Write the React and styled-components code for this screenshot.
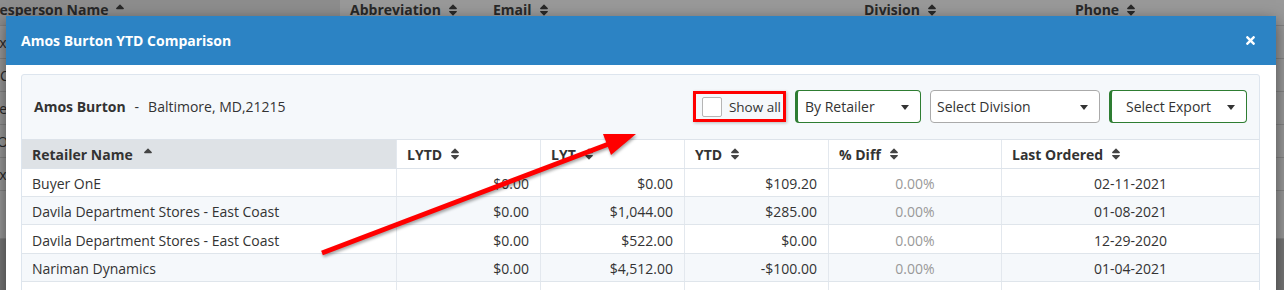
import React from 'react';
import styled, { createGlobalStyle } from 'styled-components';
import { FaSort, FaSortUp, FaTimes } from 'react-icons/fa';

const GlobalStyle = createGlobalStyle`
  html, body {
    margin: 0;
    padding: 0;
    width: 1284px;
    height: 290px;
    overflow: hidden;
    background: #c6c6c6;
    font-family: 'Open Sans', 'Noto Sans', sans-serif;
    color: #333;
  }
`;

const Page = styled.div`
  position: relative;
  width: 1284px;
  height: 290px;
  overflow: hidden;
`;

/* ---------- page behind the modal ---------- */

const BgTable = styled.div`
  margin-left: -31px;
  margin-top: -8px;
  background: #fff;
`;

const BgRow = styled.div`
  display: grid;
  grid-template-columns: 371px 143px 371px 211px 1fr;
  height: ${(p) => p.$h || 33}px;
  border-bottom: 1px solid #dcdcdc;
  box-sizing: border-box;
  font-size: 14px;
  color: #444;
  align-items: center;
`;

const BgHeadCell = styled.div`
  height: 100%;
  display: flex;
  align-items: center;
  gap: 5px;
  padding: 2px 10px 0;
  box-sizing: border-box;
  font-size: 14px;
  font-weight: 700;
  color: #444;
  background: ${(p) => (p.$sorted ? '#ececec' : '#fff')};
  svg {
    font-size: 14px;
  }
`;

const BgCell = styled.div`
  padding: 0 10px;
  white-space: nowrap;
  overflow: hidden;
`;

const Backdrop = styled.div`
  position: absolute;
  inset: 0;
  background: rgba(0, 0, 0, 0.4);
`;

/* ---------- modal ---------- */

const Modal = styled.div`
  position: absolute;
  left: 6px;
  top: 16px;
  width: 1270px;
  height: 300px;
  background: #fff;
  box-shadow: 0 5px 15px rgba(0, 0, 0, 0.5);
`;

const ModalHeader = styled.div`
  height: 49px;
  background: #2c83c4;
  display: flex;
  align-items: center;
  justify-content: space-between;
  padding: 0 19px 0 15px;
  color: #fff;
`;

const Title = styled.h4`
  margin: 0;
  font-size: 14px;
  font-weight: 700;
`;

const Close = styled.span`
  display: flex;
  font-size: 13px;
`;

const ModalBody = styled.div`
  padding: 9px 16px 0 15px;
`;

const Panel = styled.div`
  background: #f5f8fb;
  border: 1px solid #dde5ee;
  border-radius: 3px;
`;

const PanelHeading = styled.div`
  display: flex;
  align-items: center;
  justify-content: space-between;
  padding: 15px 12px 16px 12px;
`;

const Who = styled.div`
  font-size: 14px;
  color: #333;
  b {
    font-weight: 700;
  }
  span {
    margin: 0 9px;
  }
`;

const Controls = styled.div`
  display: flex;
  align-items: center;
  gap: 9px;
`;

const ShowAll = styled.label`
  display: flex;
  align-items: center;
  gap: 7px;
  height: 31px;
  box-sizing: border-box;
  border: 3px solid #ff0000;
  padding: 0 2px 0 6px;
  font-size: 13.5px;
  color: #333;
  box-shadow: 1px 1px 3px rgba(0, 0, 0, 0.25);
`;

const Check = styled.span`
  width: 20px;
  height: 20px;
  box-sizing: border-box;
  background: #fff;
  border: 1px solid #b5b5b5;
  border-radius: 2px;
`;

const Select = styled.div`
  position: relative;
  width: ${(p) => p.$w}px;
  height: 33px;
  box-sizing: border-box;
  display: flex;
  align-items: center;
  padding-left: ${(p) => p.$pad}px;
  background: #fff;
  border: 1px solid ${(p) => (p.$green ? '#2e7d32' : '#aaa')};
  border-left-width: ${(p) => (p.$green ? 3 : 1)}px;
  border-radius: 4px;
  font-size: 14px;
  color: #333;
  &::after {
    content: '';
    position: absolute;
    right: 11px;
    top: 14px;
    border-left: 4px solid transparent;
    border-right: 4px solid transparent;
    border-top: 5px solid #333;
  }
`;

/* ---------- table ---------- */

const cols = '374px 144px 144px 144px 173px 1fr';

const HeadRow = styled.div`
  display: grid;
  grid-template-columns: ${cols};
  height: 30px;
  border-top: 1px solid #dde3ea;
  border-bottom: 1px solid #dde3ea;
  box-sizing: border-box;
  background: #fff;
`;

const HeadCell = styled.div`
  display: flex;
  align-items: center;
  gap: ${(p) => (p.$sorted ? 8 : 6)}px;
  padding: 0 10px;
  font-size: 14px;
  font-weight: 700;
  color: #333;
  background: ${(p) => (p.$sorted ? '#dee2e6' : '#fff')};
  border-left: ${(p) => (p.$first ? 'none' : '1px solid #e3e8ee')};
  svg {
    font-size: 14px;
    color: #444;
  }
`;

const Row = styled.div`
  display: grid;
  grid-template-columns: ${cols};
  height: ${(p) => p.$h}px;
  border-bottom: 1px solid #dfe5eb;
  box-sizing: border-box;
  background: ${(p) => (p.$striped ? '#f5f8fb' : '#fff')};
`;

const Cell = styled.div`
  display: flex;
  align-items: center;
  justify-content: ${(p) =>
    p.$align === 'right' ? 'flex-end' : p.$align === 'center' ? 'center' : 'flex-start'};
  padding: ${(p) => (p.$align === 'right' ? '2px 11px 0 10px' : '2px 10px 0')};
  font-size: 14px;
  color: ${(p) => (p.$muted ? '#999' : '#333')};
  border-left: ${(p) => (p.$first ? 'none' : '1px solid #e3e8ee')};
  white-space: nowrap;
`;

const Arrow = styled.svg`
  position: absolute;
  left: 0;
  top: 0;
  pointer-events: none;
  filter: drop-shadow(1px 2px 1.5px rgba(0, 0, 0, 0.35));
`;

const rows = [
  ['Buyer OnE', '$0.00', '$0.00', '$109.20', '0.00%', '02-11-2021'],
  ['Davila Department Stores - East Coast', '$0.00', '$1,044.00', '$285.00', '0.00%', '01-08-2021'],
  ['Davila Department Stores - East Coast', '$0.00', '$522.00', '$0.00', '0.00%', '12-29-2020'],
  ['Nariman Dynamics', '$0.00', '$4,512.00', '-$100.00', '0.00%', '01-04-2021'],
  ['', '', '', '', '', ''],
];

const rowHeights = [28, 28, 29, 28, 28];

const bgRows = ['Alex Xu', 'Bo Chen', 'Jane Lee', 'Ty Owens', 'Max Cox', ''];

export default function App() {
  return (
    <Page>
      <GlobalStyle />
      <BgTable>
        <BgRow $h={34}>
          <BgHeadCell $sorted>
            Salesperson Name <FaSortUp />
          </BgHeadCell>
          <BgHeadCell>
            Abbreviation <FaSort />
          </BgHeadCell>
          <BgHeadCell>
            Email <FaSort />
          </BgHeadCell>
          <BgHeadCell>
            Division <FaSort />
          </BgHeadCell>
          <BgHeadCell>
            Phone <FaSort />
          </BgHeadCell>
        </BgRow>
        {bgRows.map((n, i) => (
          <BgRow key={i} $h={i === bgRows.length - 1 ? 48 : 33}>
            <BgCell>{n}</BgCell>
            <BgCell />
            <BgCell />
            <BgCell />
            <BgCell />
          </BgRow>
        ))}
      </BgTable>
      <Backdrop />

      <Modal>
        <ModalHeader>
          <Title>Amos Burton YTD Comparison</Title>
          <Close>
            <FaTimes />
          </Close>
        </ModalHeader>
        <ModalBody>
          <Panel>
            <PanelHeading>
              <Who>
                <b>Amos Burton</b>
                <span>-</span>
                Baltimore, MD,21215
              </Who>
              <Controls>
                <ShowAll>
                  <Check />
                  Show all
                </ShowAll>
                <Select $w={126} $pad={7} $green>
                  By Retailer
                </Select>
                <Select $w={170} $pad={6}>
                  Select Division
                </Select>
                <Select $w={138} $pad={14} $green>
                  Select Export
                </Select>
              </Controls>
            </PanelHeading>

            <HeadRow>
              <HeadCell $sorted $first>
                Retailer Name <FaSortUp />
              </HeadCell>
              <HeadCell>
                LYTD <FaSort />
              </HeadCell>
              <HeadCell>
                LYT <FaSort />
              </HeadCell>
              <HeadCell>
                YTD <FaSort />
              </HeadCell>
              <HeadCell>
                % Diff <FaSort />
              </HeadCell>
              <HeadCell>
                Last Ordered <FaSort />
              </HeadCell>
            </HeadRow>
            {rows.map((r, i) => (
              <Row key={i} $h={rowHeights[i]} $striped={i % 2 === 1}>
                <Cell $first>{r[0]}</Cell>
                <Cell $align="right">{r[1]}</Cell>
                <Cell $align="right">{r[2]}</Cell>
                <Cell $align="right">{r[3]}</Cell>
                <Cell $align="center" $muted>
                  {r[4]}
                </Cell>
                <Cell $align="center">{r[5]}</Cell>
              </Row>
            ))}
          </Panel>
        </ModalBody>
      </Modal>

      <Arrow width="1284" height="290" viewBox="0 0 1284 290">
        <line x1="322" y1="253" x2="610" y2="143.5" stroke="#ff0000" strokeWidth="5" />
        <polygon points="636,134 603,134 611,155" fill="#ff0000" />
      </Arrow>
    </Page>
  );
}
